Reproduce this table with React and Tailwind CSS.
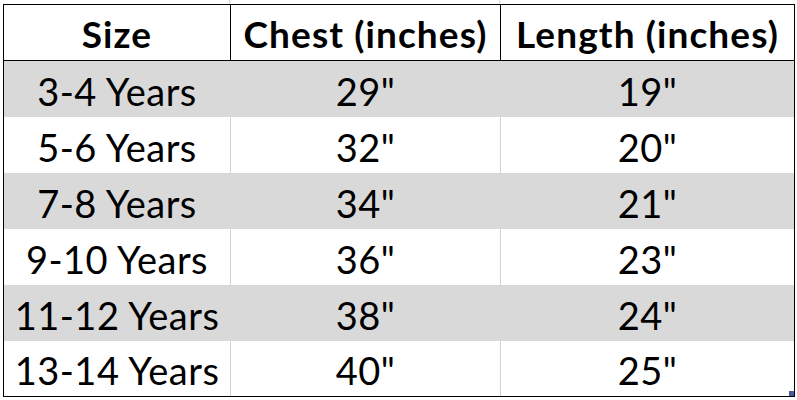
const rows = [
  ["3-4 Years", '29"', '19"'],
  ["5-6 Years", '32"', '20"'],
  ["7-8 Years", '34"', '21"'],
  ["9-10 Years", '36"', '23"'],
  ["11-12 Years", '38"', '24"'],
  ["13-14 Years", '40"', '25"'],
];

const font = { fontFamily: "Lato, 'Open Sans', sans-serif" };

export default function App() {
  return (
    <div className="w-[797px] h-[400px] bg-white relative overflow-hidden" style={font}>
      {/* faint sheet gridlines above the table */}
      <div className="h-[4px] grid grid-cols-[230px_270px_1fr]">
        <div className="border-r border-[#e1e1e1]" />
        <div className="border-r border-[#e1e1e1]" />
        <div />
      </div>
      <div className="pl-[3px]">
        <div className="w-[792px] border border-black text-black">
          <div className="h-[56px] grid grid-cols-[227px_270px_1fr] border-b border-black font-bold text-[37px] tracking-[1.1px] leading-none">
            <div className="border-r border-black flex items-end justify-center pb-[8px]">Size</div>
            <div className="border-r border-black flex items-end justify-center pb-[8px]">Chest (inches)</div>
            <div className="flex items-end justify-center pb-[8px]">Length (inches)</div>
          </div>
          {rows.map((r, i) => (
            <div
              key={r[0]}
              className={`grid grid-cols-[227px_270px_1fr] text-[38px] tracking-[0.5px] leading-none ${i === 5 ? "h-[55px]" : "h-[56px]"} ${
                i % 2 === 0 ? "bg-[#d9d9d9]" : "bg-white"
              }`}
            >
              <div className={`border-r flex items-end justify-center pb-[7px] ${i % 2 === 0 ? "border-[#d9d9d9]" : "border-[#d4d4d4]"}`}>
                {r[0]}
              </div>
              <div className={`border-r flex items-end justify-center pb-[7px] ${i % 2 === 0 ? "border-[#d9d9d9]" : "border-[#d4d4d4]"}`}>
                {r[1]}
              </div>
              <div className="flex items-end justify-center pb-[7px]">{r[2]}</div>
            </div>
          ))}
        </div>
      </div>
      <div className="absolute left-[789px] top-[391px] w-[5px] h-[5px] bg-[#4a5a9c]" />
    </div>
  );
}
